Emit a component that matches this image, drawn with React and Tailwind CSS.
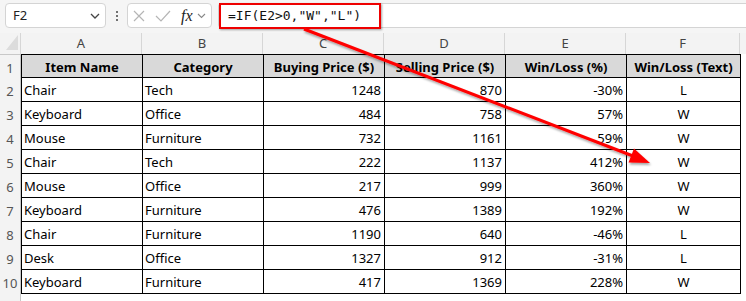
import React from "react";

const cols = [
  { key: "A", w: "w-[121px]" },
  { key: "B", w: "w-[121px]" },
  { key: "C", w: "w-[121px]" },
  { key: "D", w: "w-[121px]" },
  { key: "E", w: "w-[121px]" },
  { key: "F", w: "w-[114px]" },
];

const headers = ["Item Name", "Category", "Buying Price ($)", "Selling Price ($)", "Win/Loss (%)", "Win/Loss (Text)"];

const rows = [
  ["Chair", "Tech", "1248", "870", "-30%", "L"],
  ["Keyboard", "Office", "484", "758", "57%", "W"],
  ["Mouse", "Furniture", "732", "1161", "59%", "W"],
  ["Chair", "Tech", "222", "1137", "412%", "W"],
  ["Mouse", "Office", "217", "999", "360%", "W"],
  ["Keyboard", "Furniture", "476", "1389", "192%", "W"],
  ["Chair", "Furniture", "1190", "640", "-46%", "L"],
  ["Desk", "Office", "1327", "912", "-31%", "L"],
  ["Keyboard", "Furniture", "417", "1369", "228%", "W"],
];

const align = ["justify-start pl-[2px]", "justify-start pl-[2px]", "justify-end pr-[3px]", "justify-end pr-[3px]", "justify-end pr-[3px]", "justify-center"];

export default function App() {
  return (
    <div className="relative w-[746px] h-[301px] overflow-hidden bg-white text-[#000]" style={{ fontFamily: '"Noto Sans", sans-serif' }}>
      {/* formula bar */}
      <div className="flex items-start h-[33px] bg-[#f5f5f5] pt-[3px] pl-[5px]">
        <div className="flex items-center justify-between w-[101px] h-[25px] bg-white border border-[#d4d4d4] rounded-[4px] pl-[7px] pr-[5px] text-[13px] text-[#222]">
          <span>F2</span>
          <svg width="10" height="6" viewBox="0 0 10 6"><path d="M1 1 L5 5 L9 1" fill="none" stroke="#444" strokeWidth="1.3" /></svg>
        </div>
        <div className="w-[21px] h-[25px] flex flex-col items-center justify-center gap-[2px]">
          <span className="w-[2px] h-[2px] bg-[#444] rounded-full"></span>
          <span className="w-[2px] h-[2px] bg-[#444] rounded-full"></span>
          <span className="w-[2px] h-[2px] bg-[#444] rounded-full"></span>
        </div>
        <div className="flex items-center w-[85px] h-[25px] bg-white border border-[#d4d4d4] rounded-[4px] pl-[5px]">
          <svg width="12" height="12" viewBox="0 0 12 12"><path d="M1 1 L11 11 M11 1 L1 11" stroke="#b5b5b5" strokeWidth="1.2" /></svg>
          <svg width="16" height="12" viewBox="0 0 16 12" className="ml-[10px]"><path d="M1 6 L6 11 L15 1" fill="none" stroke="#b5b5b5" strokeWidth="1.2" /></svg>
          <span className="ml-[10px] italic text-[16px] text-[#222] leading-none" style={{ fontFamily: '"Liberation Serif", serif' }}>fx</span>
          <svg width="9" height="6" viewBox="0 0 9 6" className="ml-[4px]"><path d="M1 1 L4.5 4.5 L8 1" fill="none" stroke="#888" strokeWidth="1.1" /></svg>
        </div>
        <div className="ml-[6px] flex-1 h-[25px] bg-white border border-[#d4d4d4] rounded-l-[4px] border-r-0"></div>
      </div>

      {/* red highlight around formula */}
      <div className="absolute left-[219px] top-[3px] w-[162px] h-[26px] border-2 border-[#ee0000] flex items-center pl-[7px] text-[13px] text-[#111] shadow-[1px_1px_2px_rgba(0,0,0,0.35)]" style={{ fontFamily: '"DejaVu Sans Mono", monospace' }}>
        =IF(E2&gt;0,"W","L")
      </div>

      {/* column header row */}
      <div className="flex h-[21px] bg-[#f3f3f3] text-[13px] text-[#444]">
        <div className="relative w-[21px] h-full border-r border-[#d6d6d6]">
          <svg className="absolute left-[6px] top-[2px]" width="12" height="15" viewBox="0 0 12 15"><path d="M12 0 L12 15 L0 15 Z" fill="#dcdcdc" /></svg>
        </div>
        {cols.map((c) => (
          <div key={c.key} className={`${c.w} h-full border-r border-[#d6d6d6] flex items-center justify-center`}>
            {c.key}
          </div>
        ))}
      </div>

      {/* grid */}
      <div className="flex">
        <div className="w-[21px] flex flex-col bg-[#f3f3f3] border-r border-[#c8c8c8] text-[13px] text-[#555]">
          {Array.from({ length: 11 }).map((_, i) => (
            <div key={i} className={`h-[24px] shrink-0 flex items-center justify-center pt-[4px] ${i === 0 ? "border-t border-[#c8c8c8]" : ""}`}>
              {i < 10 ? i + 1 : ""}
            </div>
          ))}
        </div>
        <div className="flex flex-col">
          <div className="flex border-t border-l border-black bg-[#d9d9d9] text-[13px] font-bold">
            {headers.map((h, j) => (
              <div key={j} className={`${cols[j].w} h-[23px] border-r border-b border-black flex items-center justify-center pt-[3px] box-border`}>
                {h}
              </div>
            ))}
          </div>
          {rows.map((r, i) => (
            <div key={i} className="flex border-l border-black bg-white text-[13px]">
              {r.map((v, j) => (
                <div key={j} className={`${cols[j].w} h-[24px] border-r border-b border-black flex items-center ${align[j]} pt-[3px]`}>
                  {v}
                </div>
              ))}
            </div>
          ))}
        </div>
      </div>

      {/* red arrow */}
      <svg className="absolute left-0 top-0 pointer-events-none" width="746" height="301" viewBox="0 0 746 301">
        <defs>
          <filter id="sh" x="-10%" y="-10%" width="120%" height="130%">
            <feDropShadow dx="1" dy="2" stdDeviation="1.2" floodColor="#000" floodOpacity="0.35" />
          </filter>
        </defs>
        <g filter="url(#sh)">
          <line x1="304" y1="29" x2="633" y2="156" stroke="#ff0000" strokeWidth="3" />
          <polygon points="650,163 634,148.5 628.5,162.5" fill="#ff0000" />
        </g>
      </svg>
    </div>
  );
}
